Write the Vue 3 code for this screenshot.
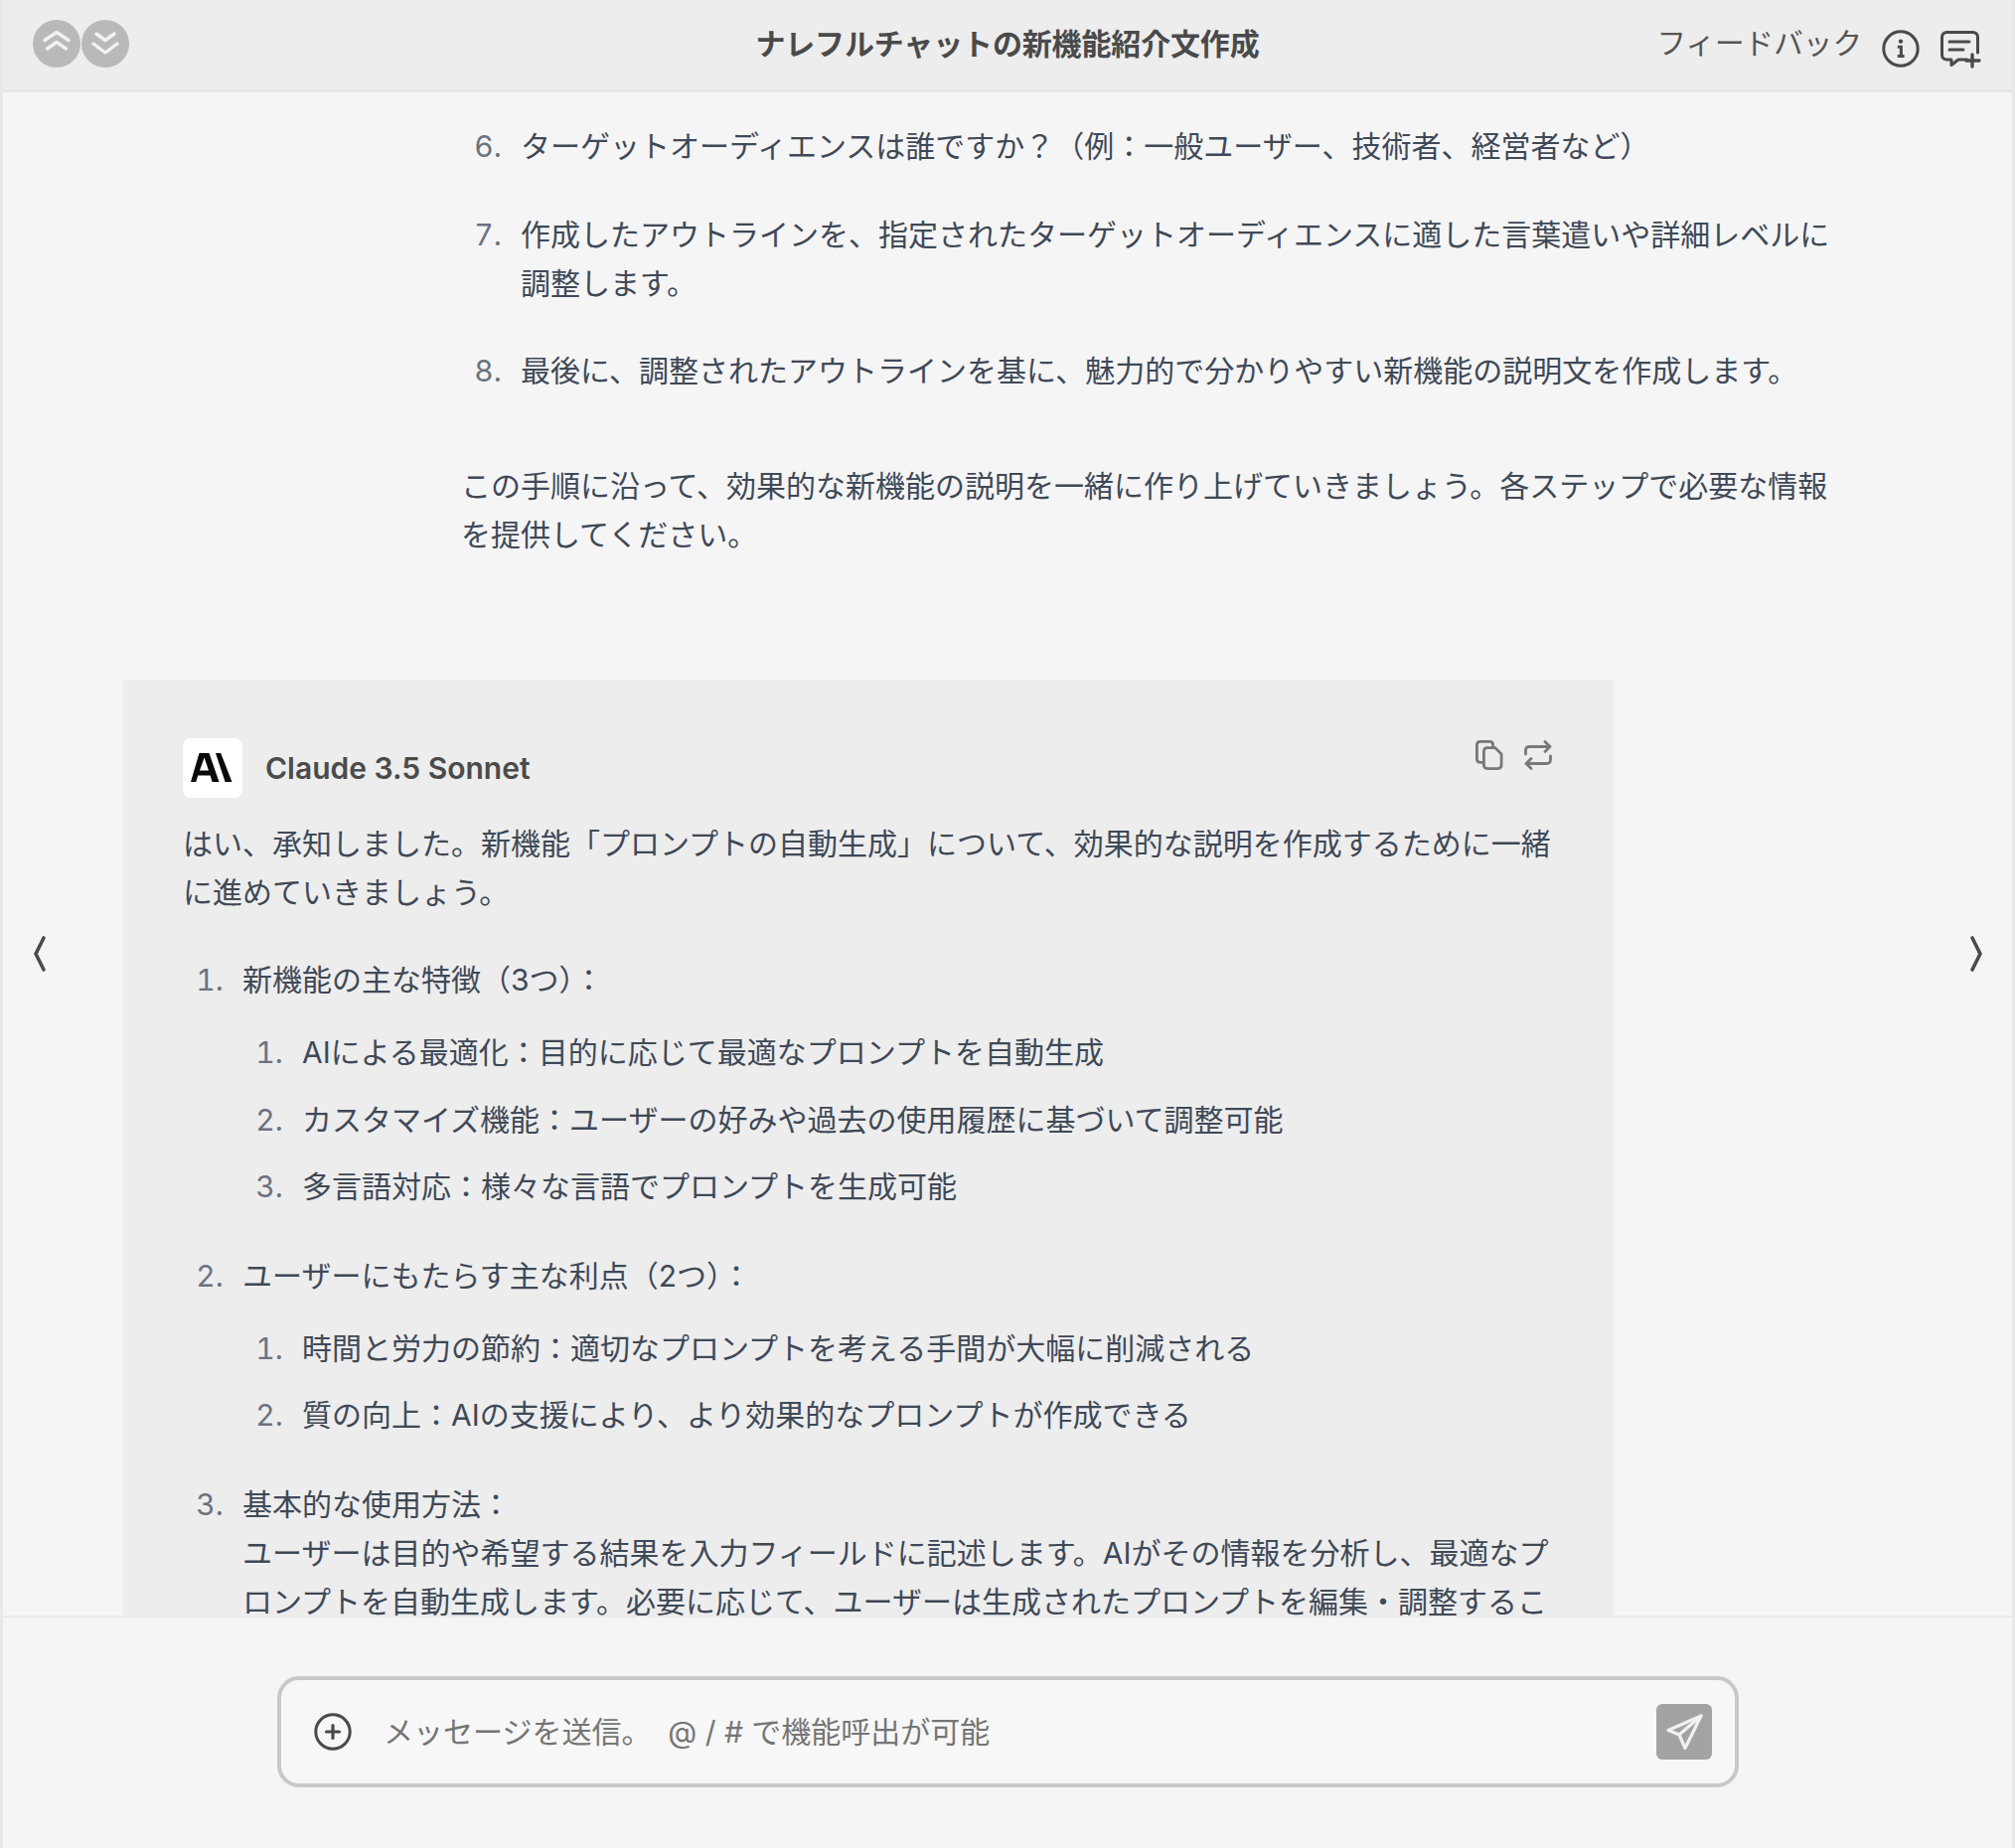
<script setup>
const userSteps = [
  'ターゲットオーディエンスは誰ですか？（例：一般ユーザー、技術者、経営者など）',
  '作成したアウトラインを、指定されたターゲットオーディエンスに適した言葉遣いや詳細レベルに調整します。',
  '最後に、調整されたアウトラインを基に、魅力的で分かりやすい新機能の説明文を作成します。'
]
const features = [
  'AIによる最適化：目的に応じて最適なプロンプトを自動生成',
  'カスタマイズ機能：ユーザーの好みや過去の使用履歴に基づいて調整可能',
  '多言語対応：様々な言語でプロンプトを生成可能'
]
const benefits = [
  '時間と労力の節約：適切なプロンプトを考える手間が大幅に削減される',
  '質の向上：AIの支援により、より効果的なプロンプトが作成できる'
]
const placeholder = 'メッセージを送信。  @ / # で機能呼出が可能'
</script>

<template>
  <div class="app">
    <header class="header">
      <div class="scroll-btns">
        <button class="circle" aria-label="上へ">
          <svg width="30" height="30" viewBox="0 0 30 30" fill="none" stroke="#f2f2f2" stroke-width="3.4" stroke-linecap="round" stroke-linejoin="round">
            <path d="M3 11.5 15 3.5 27 11.5" />
            <path d="M5.5 20 15 13.5 24.5 20" />
          </svg>
        </button>
        <button class="circle" aria-label="下へ">
          <svg width="30" height="30" viewBox="0 0 30 30" fill="none" stroke="#f2f2f2" stroke-width="3.4" stroke-linecap="round" stroke-linejoin="round">
            <path d="M6 5 15 11.5 24 5" />
            <path d="M3 15 15 24 27 15" />
          </svg>
        </button>
      </div>
      <h1 class="title">ナレフルチャットの新機能紹介文作成</h1>
      <div class="header-right">
        <span class="feedback">フィードバック</span>
        <svg class="info" width="38" height="38" viewBox="0 0 38 38" fill="none" stroke="#4a4a4a">
          <circle cx="19" cy="19" r="17.2" stroke-width="3" />
          <circle cx="19" cy="11.6" r="2.2" fill="#4a4a4a" stroke="none" />
          <path d="M15.8 17.2H19.4V26M15.8 26.4H22.6" stroke-width="3" />
        </svg>
        <svg class="note" width="42" height="38" viewBox="0 0 42 38" fill="none" stroke="#4a4a4a" stroke-width="3" stroke-linecap="round" stroke-linejoin="round">
          <path d="M27 29H18L11 34.5V29H6.5C3.5 29 1.5 27 1.5 24V6.5C1.5 3.5 3.5 1.5 6.5 1.5H32.5C35.5 1.5 37.5 3.5 37.5 6.5V22" />
          <path d="M9 11H29M9 19H23" />
          <path d="M32 24V36M26 30H39" stroke-width="3.4" />
        </svg>
      </div>
    </header>

    <main class="main">
      <section class="message user">
        <ol class="steps" start="6">
          <li v-for="step in userSteps" :key="step">{{ step }}</li>
        </ol>
        <p class="closing">この手順に沿って、効果的な新機能の説明を一緒に作り上げていきましょう。各ステップで必要な情報を提供してください。</p>
      </section>

      <section class="message assistant">
        <div class="meta">
          <div class="logo">
            <svg width="60" height="60" viewBox="0 0 60 60" fill="#0a0a0a">
              <path fill-rule="evenodd" d="M16.5 15H26.5L36.5 44H29.6L27.6 37.6H15.3L13.2 44H8ZM17 32.6H26L21.6 19.4Z" />
              <path d="M33 15H38.2L49.5 44H42.6Z" />
            </svg>
          </div>
          <span class="model">Claude 3.5 Sonnet</span>
          <div class="actions">
            <svg width="28" height="30" viewBox="0 0 30 32" fill="none" stroke="#787878" stroke-width="3" stroke-linejoin="round" stroke-linecap="round">
              <path d="M9 24H5.5C3 24 1.5 22.5 1.5 20V5.5C1.5 3 3 1.5 5.5 1.5H15C17.5 1.5 19 3 19 5.5V7" />
              <path d="M13 8H21L28 15V26.5C28 29 26.5 30.5 24 30.5H13C10.5 30.5 9 29 9 26.5V12C9 9.5 10.5 8 13 8Z" />
            </svg>
            <svg width="28" height="30" viewBox="0 0 28 30" fill="none" stroke="#787878" stroke-width="2.8" stroke-linejoin="round" stroke-linecap="round">
              <path d="M1.5 14V10.5C1.5 8 3 6.5 5.5 6.5H26L21 1.5M26 6.5L21 11.5" />
              <path d="M26.5 16V19.5C26.5 22 25 23.5 22.5 23.5H2L7 18.5M2 23.5L7 28.5" />
            </svg>
          </div>
        </div>
        <p class="lead">はい、承知しました。新機能「プロンプトの自動生成」について、効果的な説明を作成するために一緒に進めていきましょう。</p>
        <ol class="steps">
          <li>
            新機能の主な特徴（3つ）：
            <ol class="sub">
              <li v-for="item in features" :key="item">{{ item }}</li>
            </ol>
          </li>
          <li>
            ユーザーにもたらす主な利点（2つ）：
            <ol class="sub">
              <li v-for="item in benefits" :key="item">{{ item }}</li>
            </ol>
          </li>
          <li>
            基本的な使用方法：<br />
            ユーザーは目的や希望する結果を入力フィールドに記述します。AIがその情報を分析し、最適なプロンプトを自動生成します。必要に応じて、ユーザーは生成されたプロンプトを編集・調整することができます。
          </li>
        </ol>
      </section>

      <button class="nav nav-left" aria-label="前へ">
        <svg width="14" height="38" viewBox="0 0 14 38" fill="none" stroke="#4a4a4a" stroke-width="3.6" stroke-linecap="round" stroke-linejoin="round"><path d="M11 3 3 19 11 35" /></svg>
      </button>
      <button class="nav nav-right" aria-label="次へ">
        <svg width="14" height="38" viewBox="0 0 14 38" fill="none" stroke="#4a4a4a" stroke-width="3.6" stroke-linecap="round" stroke-linejoin="round"><path d="M3 3 11 19 3 35" /></svg>
      </button>
    </main>

    <footer class="footer">
      <div class="composer">
        <svg width="38" height="38" viewBox="0 0 38 38" fill="none" stroke="#4a4a4a">
          <circle cx="19" cy="19" r="17.2" stroke-width="3" />
          <path d="M12.5 19H25.5M19 12.5V25.5" stroke-width="3.2" stroke-linecap="round" />
        </svg>
        <span class="placeholder">{{ placeholder }}</span>
        <button class="send" aria-label="送信">
          <svg width="40" height="40" viewBox="0 0 40 40" fill="none" stroke="#f1f1f1" stroke-width="3.2" stroke-linejoin="round" stroke-linecap="round">
            <path d="M37 4 4 18.5 15 23 21 36.5Z" />
            <path d="M37 4 15 23" />
          </svg>
        </button>
      </div>
    </footer>
  </div>
</template>

<style scoped>
.app {
  width: 2028px;
  height: 1860px;
  box-sizing: border-box;
  display: flex;
  flex-direction: column;
  overflow: hidden;
  background: #f5f5f5;
  border-left: 3px solid #e8e8e8;
  border-right: 3px solid #e8e8e8;
  color: #3f4957;
  font-family: Inter, "Noto Sans CJK JP", sans-serif;
  font-size: 30px;
  line-height: 49px;
}
.header {
  flex: none;
  height: 93px;
  box-sizing: border-box;
  display: grid;
  grid-template-columns: 1fr auto 1fr;
  align-items: center;
  padding: 0 30px 3px 30px;
  background: #ededed;
  border-bottom: 3px solid #e6e6e6;
}
.scroll-btns {
  display: flex;
  gap: 1px;
}
.circle {
  width: 48px;
  height: 48px;
  padding: 0;
  border: 0;
  border-radius: 50%;
  background: #b9b9b9;
  display: flex;
  align-items: center;
  justify-content: center;
}
.title {
  margin: 0;
  font-size: 30px;
  font-weight: 700;
  color: #4a4a4a;
  line-height: 44px;
  letter-spacing: -0.15px;
}
.header-right {
  display: flex;
  align-items: center;
  justify-content: flex-end;
}
.feedback {
  font-size: 29.6px;
  color: #555;
  margin-right: 20px;
  margin-top: -1px;
}
.note {
  margin-left: 21px;
  margin-top: 13px;
}
.info {
  margin-top: 11px;
}
.main {
  flex: 1;
  min-height: 0;
  position: relative;
  overflow: hidden;
  display: flex;
  flex-direction: column;
  padding: 30px 121px 0;
}
.message {
  flex: none;
  width: 1500px;
  box-sizing: border-box;
  padding: 0 60px;
}
.user {
  align-self: flex-end;
  padding-bottom: 61px;
}
.assistant {
  align-self: flex-start;
  background: #ededed;
  margin-top: 60px;
  padding-top: 59px;
  padding-bottom: 60px;
}
.steps,
.sub {
  margin: 0;
  padding: 0 0 0 48.75px;
  list-style: decimal;
}
.steps li {
  padding-left: 11.25px;
}
.steps li::marker,
.sub li::marker {
  color: #6b7280;
}
.steps > li + li {
  margin-top: 39.5px;
}
.assistant .steps > li + li {
  margin-top: 40.5px;
}
.sub {
  margin-top: 24px;
}
.sub > li + li {
  margin-top: 18.5px;
}
.closing {
  margin: 67px 0 0;
}
.meta {
  height: 60px;
  display: flex;
  align-items: center;
}
.logo {
  width: 60px;
  height: 60px;
  border-radius: 8px;
  background: #fff;
  flex: none;
}
.logo svg,
.nav svg,
.send svg,
.circle svg {
  display: block;
}
.model {
  margin-left: 23px;
  font-weight: 600;
  color: #4b4b4b;
}
.actions {
  margin-left: auto;
  display: flex;
  align-items: center;
  gap: 21px;
  margin-top: -26px;
  margin-right: 2px;
}
.lead {
  margin: 22px 0 39px;
}
.nav {
  position: absolute;
  top: 848px;
  width: 14px;
  height: 38px;
  padding: 0;
  border: 0;
  background: none;
}
.nav-left {
  left: 30px;
}
.nav-right {
  right: 29px;
}
.footer {
  flex: none;
  height: 234px;
  box-sizing: border-box;
  border-top: 2px solid #ebebeb;
  padding: 59px 275px 0 276px;
  background: #f5f5f5;
}
.composer {
  height: 112px;
  box-sizing: border-box;
  display: flex;
  align-items: center;
  padding: 0 23px 0 33px;
  background: #f7f7f7;
  border: 4px solid #c8c8c8;
  border-radius: 22px;
}
.placeholder {
  margin-left: 32px;
  color: #757575;
  white-space: pre;
}
.send {
  margin-left: auto;
  width: 56px;
  height: 56px;
  padding: 0;
  border: 0;
  border-radius: 6px;
  background: #a3a3a3;
  display: flex;
  align-items: center;
  justify-content: center;
}
</style>

<style>
html, body { margin: 0; padding: 0; }
</style>
